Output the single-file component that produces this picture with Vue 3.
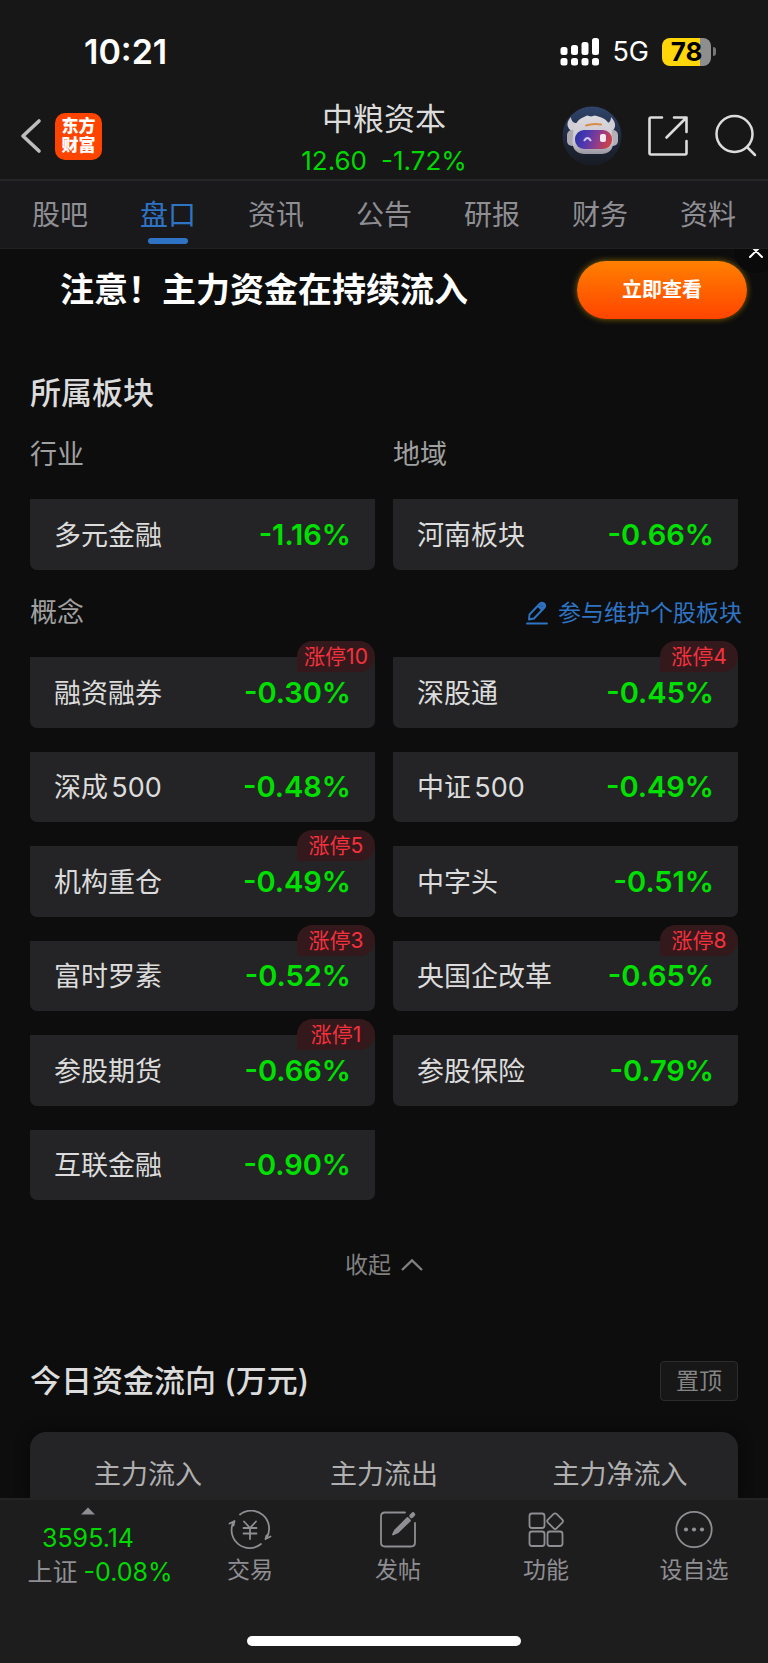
<script setup>
import { ref } from 'vue'

const tabs = ['股吧', '盘口', '资讯', '公告', '研报', '财务', '资料']
const activeTab = ref('盘口')

const groups = [
  { label: '行业', name: '多元金融', change: '-1.16%' },
  { label: '地域', name: '河南板块', change: '-0.66%' },
]

const concepts = [
  { name: '融资融券', change: '-0.30%', limit: 10 },
  { name: '深股通', change: '-0.45%', limit: 4 },
  { name: '深成500', change: '-0.48%' },
  { name: '中证500', change: '-0.49%' },
  { name: '机构重仓', change: '-0.49%', limit: 5 },
  { name: '中字头', change: '-0.51%' },
  { name: '富时罗素', change: '-0.52%', limit: 3 },
  { name: '央国企改革', change: '-0.65%', limit: 8 },
  { name: '参股期货', change: '-0.66%', limit: 1 },
  { name: '参股保险', change: '-0.79%' },
  { name: '互联金融', change: '-0.90%' },
]

const flowColumns = ['主力流入', '主力流出', '主力净流入']
</script>

<template>
  <div class="page">
    <header class="top">
      <div class="status">
        <span class="clock">10:21</span>
        <div class="status-right">
          <svg width="40" height="28" viewBox="0 0 40 28" fill="#fff">
            <rect x="0.5" y="9" width="7" height="8" rx="2.5" />
            <rect x="11" y="7" width="7" height="10" rx="2.5" />
            <rect x="21.5" y="4" width="7" height="13" rx="2.5" />
            <rect x="32" y="0" width="7" height="17" rx="2.5" />
            <rect x="0.5" y="20" width="7" height="7.5" rx="2.5" />
            <rect x="11" y="20" width="7" height="7.5" rx="2.5" />
            <rect x="21.5" y="20" width="7" height="7.5" rx="2.5" />
            <rect x="32" y="20" width="7" height="7.5" rx="2.5" />
          </svg>
          <span class="network">5G</span>
          <span class="battery"><span class="battery-body">78</span><span class="battery-tip"></span></span>
        </div>
      </div>

      <div class="nav">
        <div class="nav-side nav-back">
          <button aria-label="返回">
            <svg width="24" height="40" viewBox="0 0 24 40" fill="none" stroke="#bdbdbd" stroke-width="3.6" stroke-linecap="round" stroke-linejoin="round">
              <path d="M20 5 L4 20 L20 35" />
            </svg>
          </button>
          <a class="logo" href="#">东方<br />财富</a>
        </div>
        <div class="quote">
          <h1 class="stock">中粮资本</h1>
          <div class="price"><span>12.60</span><span>-1.72%</span></div>
        </div>
        <div class="nav-side nav-actions">
          <button aria-label="智能助手">
            <svg width="60" height="60" viewBox="0 0 60 60">
              <defs>
                <linearGradient id="disc" x1="0" y1="0" x2="0" y2="1">
                  <stop offset="0" stop-color="#30456c" />
                  <stop offset="0.5" stop-color="#202a40" />
                  <stop offset="1" stop-color="#181b22" />
                </linearGradient>
                <linearGradient id="shell" x1="0" y1="0" x2="0" y2="1">
                  <stop offset="0" stop-color="#dcdadf" />
                  <stop offset="0.7" stop-color="#c9c6ce" />
                  <stop offset="1" stop-color="#98959f" />
                </linearGradient>
                <linearGradient id="visor" x1="0" y1="0" x2="1" y2="0.2">
                  <stop offset="0" stop-color="#28309f" />
                  <stop offset="0.35" stop-color="#4b38b0" />
                  <stop offset="0.7" stop-color="#8f3c8c" />
                  <stop offset="1" stop-color="#c8414c" />
                </linearGradient>
              </defs>
              <circle cx="30" cy="30" r="29.5" fill="url(#disc)" />
              <path d="M9 11 C4 16 4 22 11 26 L17 17 C12 18 9 15 9 11Z M49 11 C54 16 55 22 49 26 L42 17 C47 18 49 15 49 11Z" fill="#d0ced5" />
              <rect x="5" y="24" width="10" height="16" rx="5" fill="#aba8b2" />
              <rect x="46" y="24" width="10" height="16" rx="5" fill="#b5b0b8" />
              <path d="M11 30 C11 19 16 13 22 11 L25 9.500 L29 10.500 L33 9.500 L38 11 C45 13 50 19 50 30 C53 42 49 47 40 48 H22 C13 47 9 42 11 30Z" fill="url(#shell)" />
              <path d="M24 19.500 Q31 17 39 18.500" fill="none" stroke="#d98c45" stroke-width="2" stroke-linecap="round" />
              <rect x="13" y="24" width="37" height="19" rx="9" fill="url(#visor)" />
              <path d="M22 35 Q25.500 29 29 35" fill="none" stroke="#cfc9f5" stroke-width="2" />
              <rect x="38" y="28" width="6" height="8" rx="2" fill="#f5e9ef" />
            </svg>
          </button>
          <button aria-label="分享">
            <svg width="42" height="42" viewBox="0 0 42 42" fill="none" stroke="#dcdcdc" stroke-width="2.6" stroke-linecap="round" stroke-linejoin="round">
              <path d="M15 2.500 H4 Q2.500 2.500 2.500 4 V38 Q2.500 39.500 4 39.500 H38 Q39.500 39.500 39.500 38 V26" />
              <path d="M27 2.500 H39.500 V17 M39 3 L19.500 22.500" />
            </svg>
          </button>
          <button aria-label="搜索">
            <svg width="44" height="44" viewBox="0 0 44 44" fill="none" stroke="#dcdcdc" stroke-width="2.5" stroke-linecap="round">
              <circle cx="20.5" cy="20" r="18" />
              <path d="M33 33 L41 41" />
            </svg>
          </button>
        </div>
      </div>
    </header>

    <nav class="tabs">
      <button
        v-for="tab in tabs"
        :key="tab"
        class="tab"
        :class="{ active: tab === activeTab }"
        @click="activeTab = tab"
      >{{ tab }}</button>
    </nav>

    <main class="content">
      <section class="banner">
        <strong class="banner-text">注意！主力资金在持续流入</strong>
        <button class="banner-button">立即查看</button>
        <button class="banner-close" aria-label="关闭">
          <svg width="16" height="16" viewBox="0 0 16 16" stroke="#fff" stroke-width="2" stroke-linecap="round">
            <path d="M2 2 L14 14 M14 2 L2 14" />
          </svg>
        </button>
      </section>

      <section class="sectors">
        <h2 class="heading">所属板块</h2>
        <div class="grid groups">
          <div v-for="group in groups" :key="group.label">
            <h3 class="label">{{ group.label }}</h3>
            <a class="card group-card" href="#">
              <span class="name">{{ group.name }}</span>
              <span class="change">{{ group.change }}</span>
            </a>
          </div>
        </div>

        <div class="label-row">
          <h3 class="label">概念</h3>
          <a class="maintain" href="#">
            <svg width="22" height="24" viewBox="0 0 22 24" fill="none" stroke="#2f74c4" stroke-width="1.9" stroke-linejoin="round" stroke-linecap="round">
              <path d="M3 18.500 L3.500 13.500 L14 2.500 Q16 0.800 18 2.500 Q20 4.500 18.500 6.500 L8 17.500 Z" />
              <path d="M12.500 5.500 L16 8.700 M1 22.500 H21" />
              <circle cx="16" cy="5" r="1.5" />
            </svg>
            <span>参与维护个股板块</span>
          </a>
        </div>

        <div class="grid concepts">
          <a v-for="item in concepts" :key="item.name" class="card" href="#">
            <span class="name">{{ item.name }}</span>
            <span class="change">{{ item.change }}</span>
            <span v-if="item.limit" class="badge">涨停{{ item.limit }}</span>
          </a>
        </div>

        <button class="collapse">
          <span>收起</span>
          <svg width="22" height="14" viewBox="0 0 22 14" fill="none" stroke="#808080" stroke-width="2.4">
            <path d="M1 12 L11 2.500 L21 12" />
          </svg>
        </button>
      </section>

      <section class="flow">
        <div class="flow-head">
          <h2 class="heading">今日资金流向 (万元)</h2>
          <button class="pin">置顶</button>
        </div>
        <table class="flow-table">
          <thead>
            <tr>
              <th v-for="column in flowColumns" :key="column" scope="col">{{ column }}</th>
            </tr>
          </thead>
        </table>
      </section>
    </main>

    <footer class="bottom">
      <div class="actions">
        <button class="index">
          <svg width="14" height="8" viewBox="0 0 14 8" fill="#8e8e93"><path d="M0 7.500 L7 0.500 L14 7.500Z" /></svg>
          <span class="index-value">3595.14</span>
          <span class="index-line"><span>上证</span><span class="index-change">-0.08%</span></span>
        </button>
        <button class="action">
          <svg width="44" height="40" viewBox="0 0 44 40" fill="none" stroke="#8e8e93" stroke-width="1.8" stroke-linecap="round" stroke-linejoin="round">
            <path d="M12 4.500 A18 18 0 0 1 38.500 28 M37.500 29 L42.500 26.500 M37.500 29 L38.500 25.500" />
            <path d="M33 34 A18 18 0 0 1 5.500 12 M1.500 13.500 L6.500 11 L5.500 15.500" />
            <path d="M16 11.500 L22 18 L28 11.500 M22 18 V29 M15.500 18 H28.500 M15.500 23.500 H28.500" />
          </svg>
          <span>交易</span>
        </button>
        <button class="action">
          <svg width="44" height="40" viewBox="0 0 44 40" fill="none" stroke="#8e8e93" stroke-width="1.8" stroke-linecap="round">
            <path d="M29 2.500 H9 Q5 2.500 5 6.500 V32.500 Q5 36.500 9 36.500 H35 Q39 36.500 39 32.500 V13" />
            <path d="M17 24.500 L19 20.500 L31.500 8 L34 10.500 L21.500 22.500Z" fill="#8e8e93" stroke-linejoin="round" />
            <path d="M35.500 6 L37 4.500" stroke-width="4.5" />
          </svg>
          <span>发帖</span>
        </button>
        <button class="action">
          <svg width="44" height="40" viewBox="0 0 44 40" fill="none" stroke="#8e8e93" stroke-width="1.8" stroke-linejoin="round">
            <rect x="5.5" y="3.5" width="15" height="14.5" rx="2.5" />
            <rect x="5.5" y="21.5" width="15" height="14.5" rx="2.5" />
            <rect x="23.5" y="21.5" width="15" height="14.5" rx="2.5" />
            <rect x="25" y="5" width="12.2" height="12.2" rx="2" transform="rotate(45 31.1 11.1)" />
          </svg>
          <span>功能</span>
        </button>
        <button class="action">
          <svg width="44" height="40" viewBox="0 0 44 40" fill="none" stroke="#8e8e93" stroke-width="1.8">
            <circle cx="22" cy="19.5" r="17.7" />
            <g fill="#8e8e93" stroke="none">
              <circle cx="14" cy="19.5" r="2.1" /><circle cx="22" cy="19.5" r="2.1" /><circle cx="30" cy="19.5" r="2.1" />
            </g>
          </svg>
          <span>设自选</span>
        </button>
      </div>
      <div class="home-bar"></div>
    </footer>
  </div>
</template>

<style>
body {
  background: #0d0d0d;
}
</style>

<style scoped>
.page {
  display: flex;
  flex-direction: column;
  min-height: 100vh;
  background: #0d0d0d;
  color: #dcdcdc;
  font-family: Inter, "Noto Sans CJK SC", sans-serif;
}
.page * {
  box-sizing: border-box;
}
button {
  padding: 0;
  border: 0;
  background: none;
  color: inherit;
  font: inherit;
  cursor: pointer;
}
a {
  color: inherit;
  text-decoration: none;
}
h1, h2, h3 {
  margin: 0;
}
svg {
  display: block;
  flex: none;
}

.top {
  background: #171717;
  border-bottom: 2px solid #252526;
}
.status {
  display: flex;
  align-items: center;
  justify-content: space-between;
  height: 95px;
  padding: 8px 52px 0 84px;
  color: #fff;
}
.clock {
  font-size: 34px;
  font-weight: 600;
}
.status-right {
  display: flex;
  align-items: center;
}
.network {
  margin: 0 13px 0 12px;
  font-size: 27px;
  line-height: 28px;
}
.battery {
  display: flex;
  align-items: center;
  gap: 2px;
}
.battery-body {
  width: 49px;
  border-radius: 8px;
  background: linear-gradient(90deg, #ffd60a 78%, #8e8e8e 78%);
  color: #000;
  font-size: 26px;
  font-weight: 700;
  line-height: 28px;
  text-align: center;
}
.battery-tip {
  width: 3px;
  height: 9px;
  border-radius: 0 4px 4px 0;
  background: #777;
}

.nav {
  display: grid;
  grid-template-columns: 1fr auto 1fr;
  align-items: center;
  height: 84px;
  padding: 0 10px 2px;
}
.nav-side {
  display: flex;
  align-items: center;
}
.nav-back {
  gap: 12px;
  padding-left: 9px;
}
.nav-actions {
  justify-content: flex-end;
  gap: 25px;
}
.logo {
  width: 47px;
  height: 47px;
  padding-top: 4px;
  border-radius: 10px;
  background: #ff4400;
  color: #fff;
  font-size: 17px;
  font-weight: 900;
  line-height: 19px;
  text-align: center;
}
.quote {
  padding-top: 6px;
  text-align: center;
}
.stock {
  margin-bottom: 8px;
  font-size: 31px;
  font-weight: 400;
  line-height: 36px;
}
.price {
  display: flex;
  gap: 14px;
  color: #00d900;
  font-size: 26px;
  line-height: 32px;
}

.tabs {
  display: flex;
  padding: 0 6px;
  background: #19191b;
  border-bottom: 1px solid #202022;
}
.tab {
  position: relative;
  flex: 1;
  padding-top: 2px;
  color: #8e8e93;
  font-size: 28px;
  line-height: 65px;
}
.tab.active {
  color: #2f74c4;
}
.tab.active::after {
  content: "";
  position: absolute;
  bottom: 4px;
  left: 50%;
  width: 40px;
  height: 6px;
  margin-left: -20px;
  border-radius: 3px;
  background: #2f74c4;
}

.content {
  flex: 1;
}
.banner {
  position: relative;
  display: flex;
  align-items: center;
  justify-content: space-between;
  height: 80px;
  padding: 2px 21px 0 60px;
  overflow: hidden;
}
.banner-text {
  padding-bottom: 6px;
  color: #fff;
  font-size: 34px;
  font-weight: 700;
}
.banner-button {
  width: 170px;
  border-radius: 29px;
  background: linear-gradient(#ff8000, #ff4400);
  box-shadow: 0 0 6px #8a6a00;
  color: #fff;
  font-size: 20px;
  font-weight: 700;
  line-height: 58px;
}
.banner-close {
  position: absolute;
  top: -20px;
  right: -10px;
  display: grid;
  place-items: center;
  width: 44px;
  height: 44px;
  border-radius: 50%;
  background: #0a0a0a;
}

.sectors,
.flow {
  padding: 0 30px;
}
.sectors {
  padding-top: 42px;
}
.heading {
  font-size: 31px;
  font-weight: 500;
  line-height: 44px;
}
.grid {
  display: grid;
  grid-template-columns: 1fr 1fr;
  column-gap: 18px;
}
.groups {
  padding-top: 22px;
}
.label {
  color: #a0a0a0;
  font-size: 27px;
  font-weight: 400;
  line-height: 36px;
}
.card {
  position: relative;
  display: flex;
  align-items: center;
  justify-content: space-between;
  padding: 0 24px;
  border-radius: 0 0 7px 7px;
  background: #242426;
}
.group-card {
  height: 71px;
  margin-top: 26px;
}
.name {
  padding-bottom: 2px;
  font-size: 27px;
  text-autospace: normal;
}
.change {
  color: #00e000;
  font-size: 29px;
  font-weight: 600;
}
.label-row {
  display: flex;
  align-items: center;
  justify-content: space-between;
  margin: 25px -4px 26px 0;
}
.maintain {
  display: flex;
  align-items: center;
  gap: 10px;
  color: #2f74c4;
  font-size: 23px;
  line-height: 36px;
}
.concepts {
  grid-auto-rows: 1fr;
  row-gap: 24px;
  min-height: 543px;
}
.badge {
  position: absolute;
  top: -16px;
  right: 0;
  width: 78px;
  border-radius: 16px 16px 16px 0;
  background: #33191c;
  color: #f5313d;
  font-size: 21px;
  line-height: 31px;
  text-align: center;
}
.collapse {
  display: flex;
  align-items: center;
  gap: 10px;
  margin: 48px auto 0;
  color: #808080;
  font-size: 23px;
  line-height: 34px;
}

.flow {
  padding-top: 77px;
}
.flow-head {
  display: flex;
  align-items: center;
  justify-content: space-between;
  margin-bottom: 29px;
}
.pin {
  width: 78px;
  border: 1px solid #2c2c2c;
  border-radius: 4px;
  background: #171717;
  color: #858585;
  font-size: 23px;
  line-height: 38px;
}
.flow-table {
  width: 100%;
  table-layout: fixed;
  border-collapse: separate;
  border-spacing: 0;
  border-radius: 16px 16px 0 0;
  background: #242426;
  box-shadow: 0 0 14px #080808;
}
.flow-table th {
  padding: 25px 0 5px;
  color: #b0b0b0;
  font-size: 27px;
  font-weight: 400;
  line-height: 36px;
  text-align: center;
}

.bottom {
  position: relative;
  border-top: 2px solid #242425;
  background: #1d1d1d;
  color: #8e8e93;
}
.actions {
  display: grid;
  grid-template-columns: 176px repeat(4, 1fr);
  align-items: start;
  padding-top: 7px;
}
.index,
.action {
  display: flex;
  flex-direction: column;
  align-items: center;
}
.index-value {
  margin-top: 8px;
  color: #00d900;
  font-size: 25px;
  line-height: 30px;
}
.index-line {
  display: flex;
  gap: 6px;
  margin: 4px 0 0 24px;
  font-size: 25px;
  line-height: 30px;
}
.index-change {
  color: #00d900;
}
.action {
  gap: 3px;
  padding-top: 3px;
  font-size: 23px;
  line-height: 34px;
}
.home-bar {
  width: 274px;
  height: 10px;
  margin: 49px auto 17px;
  border-radius: 5px;
  background: #fff;
}
</style>
